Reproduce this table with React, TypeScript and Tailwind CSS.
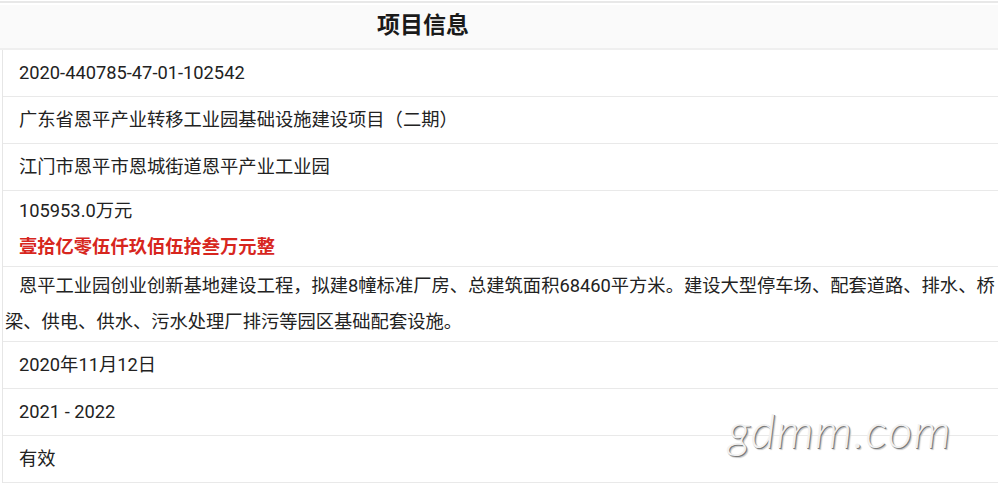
const rows: string[] = [
  "2020-440785-47-01-102542",
  "广东省恩平产业转移工业园基础设施建设项目（二期）",
  "江门市恩平市恩城街道恩平产业工业园",
];

const tail = ["2020年11月12日", "2021 - 2022", "有效"];

function Row({ children }: { children: React.ReactNode }) {
  return (
    <div className="h-[47px] flex items-center pl-[16px] border-b border-[#e9e9e9] whitespace-nowrap">
      {children}
    </div>
  );
}

export default function App() {
  return (
    <div
      className="relative w-[998px] h-[487px] overflow-hidden bg-white text-[18.3px] text-[#222]"
      style={{ fontFamily: '"Roboto", "Noto Sans CJK SC", sans-serif' }}
    >
      <div className="mt-px border-t-2 border-[#e8e8e8] pt-[2px]">
        <div className="h-[45px] bg-[#fafafa] border-b-2 border-[#efefef] flex items-center pl-[377px]">
          <span className="text-[23px] font-bold text-[#1a1a1a]">项目信息</span>
        </div>
        <div className="ml-[2px] border-l border-[#e6e6e6]">
          {rows.map((r) => (
            <Row key={r}>{r}</Row>
          ))}
          <div className="h-[76px] flex flex-col justify-center pl-[16px] border-b border-[#e9e9e9] leading-[36px]">
            <div>105953.0万元</div>
            <div className="text-[#d7261e] font-semibold">壹拾亿零伍仟玖佰伍拾叁万元整</div>
          </div>
          <div className="h-[75px] flex flex-col justify-center pl-[2px] border-b border-[#e9e9e9] leading-[36px] whitespace-nowrap">
            <div className="pl-[14px]">恩平工业园创业创新基地建设工程，拟建8幢标准厂房、总建筑面积68460平方米。建设大型停车场、配套道路、排水、桥</div>
            <div>梁、供电、供水、污水处理厂排污等园区基础配套设施。</div>
          </div>
          {tail.map((t) => (
            <Row key={t}>{t}</Row>
          ))}
        </div>
      </div>
      <div
        className="absolute left-[728px] top-[394px] text-[48px] italic font-light text-[#f1f1f1] tracking-[1px]"
        style={{
          fontFamily: '"Lato", sans-serif',
          textShadow: "1px 1px 0 #7a7a7a, 2px 2px 1px #c8c8c8",
        }}
      >
        gdmm.com
      </div>
    </div>
  );
}
